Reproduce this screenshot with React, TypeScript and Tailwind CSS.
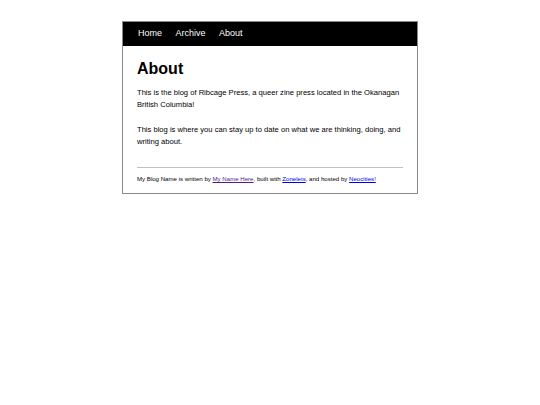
export default function App() {
  return (
    <div className="min-h-[405px] bg-white pt-[21px] font-['Liberation_Sans',Arial,sans-serif] text-black">
      <div className="mx-auto w-[296px] border border-[#8a8a8a] bg-white">
        <nav className="flex h-[24px] items-center gap-[13.5px] bg-black px-[15px] text-[9px] text-white">
          <a>Home</a>
          <a>Archive</a>
          <a>About</a>
        </nav>
        <main className="px-[14px] pb-[10px] pt-[13px]">
          <h1 className="text-[16px] font-bold leading-[20px]">About</h1>
          <div className="mt-[8px] text-[7.6px] leading-[12px]">
            <p>
              This is the blog of Ribcage Press, a queer zine press located in the Okanagan British Columbia!
            </p>
            <p className="mt-[13px]">
              This blog is where you can stay up to date on what we are thinking, doing, and writing about.
            </p>
          </div>
          <footer className="mt-[19px] border-t border-[#c0c0c0] pt-[6px] text-[6.1px] leading-[9px]">
            My Blog Name is written by{' '}
            <a className="text-[#551a8b] underline">My Name Here</a>, built with{' '}
            <a className="text-[#0000ee] underline">Zonelets</a>, and hosted by{' '}
            <a className="text-[#0000ee] underline">Neocities!</a>
          </footer>
        </main>
      </div>
    </div>
  );
}
